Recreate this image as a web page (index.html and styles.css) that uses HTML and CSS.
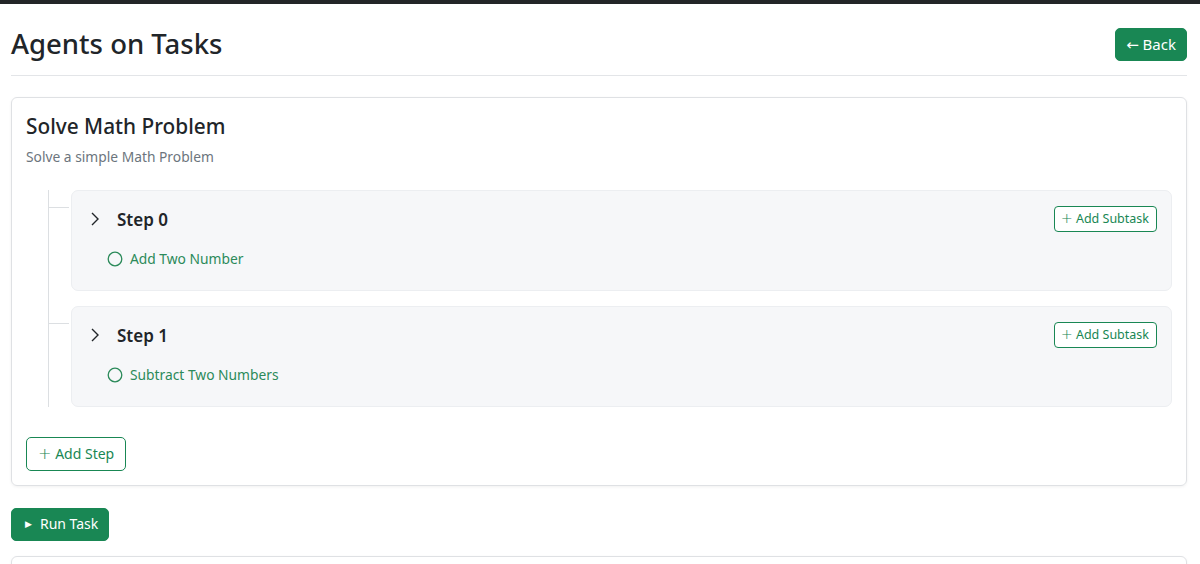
FILE: index.html
```html
<!DOCTYPE html>
<html lang="en">
<head>
  <meta charset="UTF-8">
  <meta name="viewport" content="width=device-width, initial-scale=1.0">
  <title>Agents on Tasks</title>
  <link rel="stylesheet" href="styles.css">
</head>
<body>
  <div class="topbar"></div>
  <div class="page">
    <div class="header">
      <h1>Agents on Tasks</h1>
      <button class="btn btn-green back"><span class="arrow">&larr;</span> Back</button>
    </div>

    <div class="card">
      <h2 class="card-title">Solve Math Problem</h2>
      <p class="card-desc">Solve a simple Math Problem</p>

      <div class="steps">
        <div class="step-row">
          <div class="tick"></div>
          <div class="step">
            <div class="step-head">
              <svg class="chevron" width="12" height="16" viewBox="0 0 12 16"><polyline points="3,2 9,8 3,14" fill="none" stroke="#212529" stroke-width="1.4"/></svg>
              <span class="step-name">Step 0</span>
              <button class="btn btn-outline btn-sm"><span class="plus">+</span> Add Subtask</button>
            </div>
            <div class="subtask">
              <svg width="16" height="16" viewBox="0 0 16 16"><circle cx="8" cy="8" r="6.8" fill="none" stroke="#2b8a5a" stroke-width="1.3"/></svg>
              <span>Add Two Number</span>
            </div>
          </div>
        </div>

        <div class="step-row">
          <div class="tick"></div>
          <div class="step">
            <div class="step-head">
              <svg class="chevron" width="12" height="16" viewBox="0 0 12 16"><polyline points="3,2 9,8 3,14" fill="none" stroke="#212529" stroke-width="1.4"/></svg>
              <span class="step-name">Step 1</span>
              <button class="btn btn-outline btn-sm"><span class="plus">+</span> Add Subtask</button>
            </div>
            <div class="subtask">
              <svg width="16" height="16" viewBox="0 0 16 16"><circle cx="8" cy="8" r="6.8" fill="none" stroke="#2b8a5a" stroke-width="1.3"/></svg>
              <span>Subtract Two Numbers</span>
            </div>
          </div>
        </div>
      </div>

      <button class="btn btn-outline add-step"><span class="plus">+</span> Add Step</button>
    </div>

    <button class="btn btn-green run"><span class="play">&#9654;</span>Run Task</button>

    <div class="card result"></div>
  </div>
</body>
</html>
```

FILE: styles.css
```css
* { box-sizing: border-box; }
body { margin: 0; font-family: "Noto Sans", "Open Sans", sans-serif; color: #212529; background: #fff; }
.topbar { height: 4px; background: #232527; }
.page { padding: 0 13px 0 11px; }
.header { display: flex; justify-content: space-between; align-items: center; padding: 23px 0 14px; border-bottom: 1px solid #e3e5e8; margin-bottom: 21px; }
h1 { margin: 0; font-size: 27.5px; font-weight: 500; line-height: 34px; }
.btn { font-family: inherit; cursor: pointer; border-radius: 5px; font-size: 14.5px; line-height: 20px; white-space: nowrap; }
.btn-green { background: #198754; color: #fff; border: 1px solid #198754; padding: 6px 10px; }
.btn-outline { background: #fff; color: #198754; border: 1px solid #198754; padding: 6px 11px; }
.btn-sm { font-size: 12.5px; line-height: 18px; padding: 3px 7px 3px 6px; border-radius: 4px; }
.plus { font-family: "DejaVu Sans", sans-serif; font-weight: 200; font-size: 1.15em; line-height: 1; }
.back { padding: 5px 10px 6px; height: 33px; font-size: 15px; }
.arrow { font-family: "DejaVu Sans", sans-serif; font-size: 15px; line-height: 1; }
.card { border: 1px solid #dfe1e4; border-radius: 6px; padding: 15px 14px 14px; box-shadow: 0 1px 3px rgba(0,0,0,0.06); margin-bottom: 22px; }
.card-title { margin: 0; font-size: 20.8px; font-weight: 500; line-height: 26px; }
.card-desc { margin: 8px 0 23px; font-size: 13.8px; color: #6c757d; line-height: 20px; }
.steps { margin-left: 22px; border-left: 1px solid #dcdfe2; display: flex; flex-direction: column; gap: 15px; margin-bottom: 30px; }
.step-row { display: flex; }
.tick { width: 20px; height: 1px; background: #dcdfe2; margin-top: 17px; margin-right: 2px; flex: none; }
.step { flex: 1; background: #f6f7f9; border: 1px solid #eceef1; border-radius: 7px; padding: 15px 14px 22px 17px; }
.step-head { display: flex; align-items: center; gap: 10px; }
.chevron { margin-right: 6px; }
.step-name { font-size: 17px; font-weight: 600; flex: 1; }
.subtask { display: flex; align-items: center; gap: 7px; margin: 17px 0 0 18px; color: #2b8a5a; font-size: 13.8px; }
.add-step { padding: 6px 11px; height: 34px; font-size: 14px; }
.run { padding: 5px 10px 6px 13px; height: 33px; font-size: 14px; }
.play { font-family: "DejaVu Sans", sans-serif; font-size: 9px; margin-right: 8px; vertical-align: 2px; }
.result { margin-top: 15px; height: 40px; }
```
